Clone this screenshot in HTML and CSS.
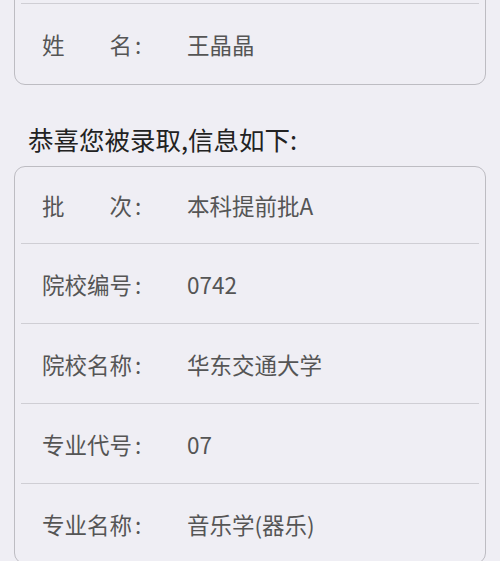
FILE: index.html
```html
<!DOCTYPE html>
<html lang="zh-CN">
<head>
  <meta charset="UTF-8" />
  <title>录取信息</title>
  <link rel="stylesheet" href="styles.css">
</head>
<body>

  <div class="page">
    <div class="card card-cut">
      <div class="row row-cont">
        <span class="label"><span>姓</span><span>名</span></span><span class="colon">:</span>
        <span class="value">王晶晶</span>
      </div>
    </div>

    <h2 class="title">恭喜您被录取,信息如下:</h2>

    <div class="card">
      <div class="row row-first">
        <span class="label"><span>批</span><span>次</span></span><span class="colon">:</span>
        <span class="value">本科提前批A</span>
      </div>
      <div class="row">
        <span class="label"><span>院校编号</span></span><span class="colon">:</span>
        <span class="value">0742</span>
      </div>
      <div class="row">
        <span class="label"><span>院校名称</span></span><span class="colon">:</span>
        <span class="value">华东交通大学</span>
      </div>
      <div class="row">
        <span class="label"><span>专业代号</span></span><span class="colon">:</span>
        <span class="value">07</span>
      </div>
      <div class="row">
        <span class="label"><span>专业名称</span></span><span class="colon">:</span>
        <span class="value">音乐学(器乐)</span>
      </div>
    </div>
  </div>

</body>
</html>
```

FILE: styles.css
```css
body {
  margin: 0;
  background-color: #efeef4;
  font-family: "Noto Sans CJK SC", "Noto Sans", sans-serif;
  color: #555;
  overflow: hidden;
}

.page {
  padding: 0 14px;
}

.card {
  border: 1px solid #bdbcc2;
  border-radius: 11px;
  background-color: #efeef4;
}

.card-cut {
  margin-top: -40px;
  padding-top: 42px;
}

.row {
  display: flex;
  align-items: center;
  height: 79px;
  margin: 0 6px;
  padding-left: 21px;
  font-size: 22.5px;
  line-height: 30px;
}

.row + .row,
.row-cont {
  border-top: 1px solid #cfced4;
}

.row-cont {
  height: 80px;
}

.row-first {
  height: 76px;
}

.label {
  display: flex;
  justify-content: space-between;
  width: 90px;
}

.colon {
  width: 52px;
  padding-left: 3px;
}

.value {
  color: #555;
}

.title {
  margin: 39px 0 12px;
  padding-left: 14px;
  font-size: 25.5px;
  line-height: 30px;
  font-weight: normal;
  color: #222;
}
```
